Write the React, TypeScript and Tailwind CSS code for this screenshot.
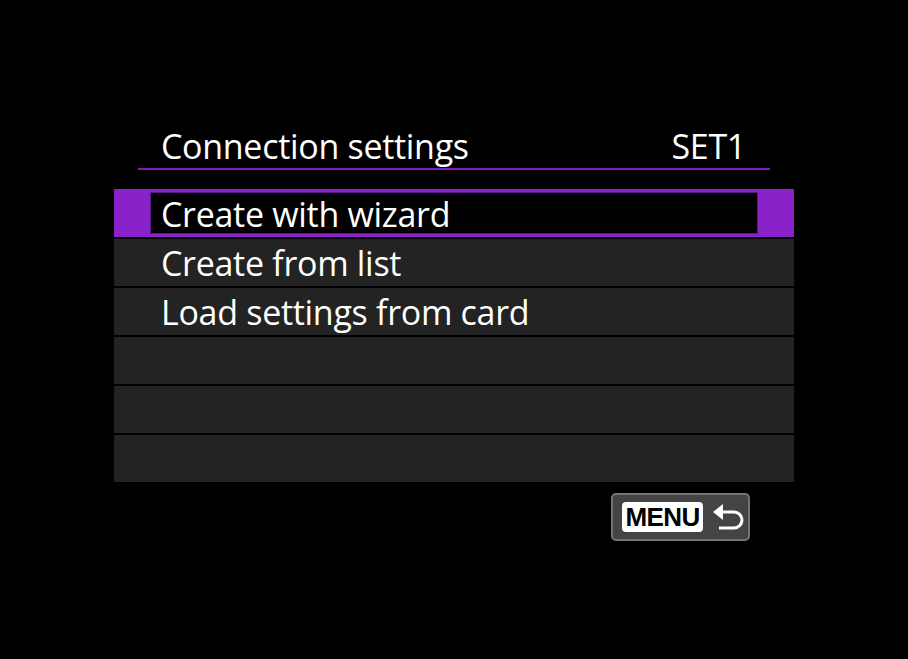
import React from 'react';

const rows = ['Create with wizard', 'Create from list', 'Load settings from card', '', '', ''];

function ReturnArrow() {
  return (
    <svg width="34" height="28" viewBox="0 0 34 28" fill="none">
      <path d="M9 9 H22 a8 8 0 0 1 0 16 H7" stroke="white" strokeWidth="3" fill="none" />
      <path d="M1 9 L11 1 V17 Z" fill="white" />
    </svg>
  );
}

export default function App() {
  return (
    <div
      className="w-[908px] h-[659px] bg-black flex flex-col items-center pt-[122px]"
      style={{ fontFamily: '"Open Sans", "Noto Sans", sans-serif' }}
    >
      <div className="w-[680px] flex flex-col">
        <div className="mx-6 h-[48px] flex items-end justify-between pl-[23px] pr-6 pb-[2px] border-b-2 border-[#7d1fbd] text-white text-[34px] tracking-[-0.3px] leading-none">
          <span className="pb-[3px]">Connection settings</span>
          <span className="pb-[3px]">SET1</span>
        </div>
        <div className="mt-[19px] flex flex-col gap-[2px]">
          {rows.map((label, i) =>
            i === 0 ? (
              <div key={i} className="h-[48px] bg-[#8a22c9] px-9 py-[3px] flex">
                <div className="flex-1 bg-black border border-[#5c1690] flex items-center pl-[10px] pt-[2px] text-white text-[34px] tracking-[-0.3px] leading-none">
                  {label}
                </div>
              </div>
            ) : (
              <div key={i} className="h-[47px] bg-[#232323] flex items-center pl-[47px] pt-[1px] text-white text-[34px] tracking-[-0.3px] leading-none">
                {label}
              </div>
            )
          )}
        </div>
        <div className="mt-[11px] self-end mr-[44px] w-[139px] h-[48px] rounded-[5px] border-2 border-[#747474] bg-[#444444] flex items-center pl-[9px] gap-[9px]">
          <div className="h-[30px] w-[81px] bg-white rounded-[4px] flex items-center justify-center text-black font-bold text-[26px] tracking-[-0.6px] leading-none" style={{ fontFamily: '"Liberation Sans", Arial, sans-serif' }}>
            MENU
          </div>
          <ReturnArrow />
        </div>
      </div>
    </div>
  );
}
